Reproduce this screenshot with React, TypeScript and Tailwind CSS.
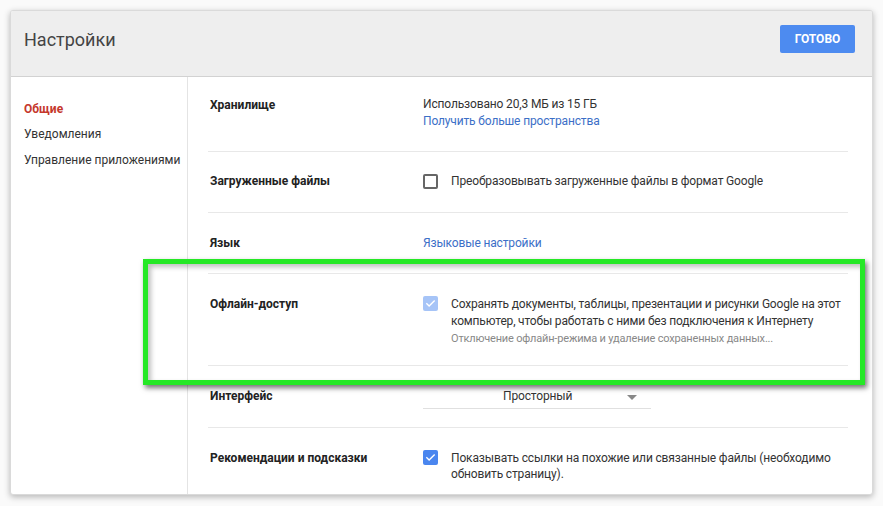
import React from "react";

const Check = ({ color }: { color: string }) => (
  <span className={`flex h-[15px] w-[15px] shrink-0 items-center justify-center rounded-[2px] ${color}`}>
    <svg width="11" height="11" viewBox="0 0 24 24" fill="none">
      <path d="M4 12.5l5 5L20 6.5" stroke="white" strokeWidth="3" strokeLinecap="square" />
    </svg>
  </span>
);

export default function App() {
  return (
    <div
      className="relative h-[506px] w-[883px] overflow-hidden bg-[#fafafa] pl-[10px] pt-[10px]"
      style={{ fontFamily: "Roboto, 'Noto Sans', sans-serif" }}
    >
      <div className="flex h-[485px] w-[863px] flex-col overflow-hidden rounded-[3px] border border-[#dadada] bg-white shadow-[0_2px_6px_rgba(0,0,0,0.28)]">
        <div className="flex h-[66px] shrink-0 items-center justify-between border-b border-[#d2d2d2] bg-[#eeeeee] pb-[9px] pl-[13px] pr-[17px]">
          <div className="text-[18px] text-[#444]">Настройки</div>
          <div className="flex h-[28px] w-[75px] items-center justify-center rounded-[2px] bg-[#4d8bf0] text-[12px] font-bold text-white">
            ГОТОВО
          </div>
        </div>
        <div className="flex flex-1">
          <div className="w-[177px] shrink-0 whitespace-nowrap border-r border-[#e4e4e4] pl-[13px] pt-[24px] text-[12px] leading-[16px] text-[#333]">
            <div className="h-[25px] font-bold text-[#c5372c]">Общие</div>
            <div className="h-[26px]">Уведомления</div>
            <div className="h-[26px]">Управление приложениями</div>
          </div>
          <div className="min-w-0 flex-1 pl-[20px] pr-[24px] text-[12px] text-[#333]">
            <div className="flex h-[75px] border-b border-[#e8e8e8] pl-[2px] pt-[19px]">
              <div className="w-[213px] shrink-0 text-[12px] font-bold text-[#222]">Хранилище</div>
              <div className="leading-[17px] tracking-[-0.15px]">
                <div>Использовано 20,3 МБ из 15 ГБ</div>
                <div className="text-[#3c6fc7]">Получить больше пространства</div>
              </div>
            </div>
            <div className="flex h-[61px] items-start border-b border-[#e8e8e8] pl-[2px] pt-[21px] leading-[17px]">
              <div className="w-[213px] shrink-0 font-bold text-[#222]">Загруженные файлы</div>
              <div className="flex items-center gap-[13px] whitespace-nowrap tracking-[-0.15px]">
                <span className="h-[15px] w-[15px] shrink-0 rounded-[2px] border-2 border-[#666]" />
                <span>Преобразовывать загруженные файлы в формат Google</span>
              </div>
            </div>
            <div className="flex h-[61px] border-b border-[#e8e8e8] pl-[2px] pt-[22px] leading-[17px]">
              <div className="w-[213px] shrink-0 font-bold text-[#222]">Язык</div>
              <div className="tracking-[-0.15px] text-[#3c6fc7]">Языковые настройки</div>
            </div>
            <div className="flex h-[92px] border-b border-[#e8e8e8] pl-[2px] pt-[22px] leading-[17px]">
              <div className="w-[213px] shrink-0 font-bold text-[#222]">Офлайн-доступ</div>
              <div className="flex items-start gap-[13px] whitespace-nowrap tracking-[-0.18px]">
                <Check color="bg-[#a6c4f7]" />
                <div>
                  <div>Сохранять документы, таблицы, презентации и рисунки Google на этот</div>
                  <div>компьютер, чтобы работать с ними без подключения к Интернету</div>
                  <div className="text-[11px] text-[#888]">
                    Отключение офлайн-режима и удаление сохраненных данных...
                  </div>
                </div>
              </div>
            </div>
            <div className="flex h-[62px] border-b border-[#e8e8e8] pl-[2px] pt-[22px] leading-[17px]">
              <div className="w-[213px] shrink-0 font-bold text-[#222]">Интерфейс</div>
              <div className="flex h-[21px] w-[228px] shrink-0 items-start border-b border-[#e0e0e0]">
                <span className="w-[204px] pl-[80px] tracking-[-0.15px]">Просторный</span>
                <svg width="10" height="17" viewBox="0 0 10 17">
                  <path d="M0 7h10L5 12z" fill="#888" />
                </svg>
              </div>
            </div>
            <div className="flex pl-[2px] pt-[22px] leading-[16px]">
              <div className="w-[213px] shrink-0 font-bold text-[#222]">Рекомендации и подсказки</div>
              <div className="flex items-start gap-[13px] whitespace-nowrap tracking-[-0.15px]">
                <Check color="bg-[#4a86ef]" />
                <div>
                  <div>Показывать ссылки на похожие или связанные файлы (необходимо</div>
                  <div>обновить страницу).</div>
                </div>
              </div>
            </div>
          </div>
        </div>
      </div>
      <div className="absolute left-[143px] top-[259px] h-[126px] w-[722px] border-[5px] border-[#25e826] shadow-[2px_3px_5px_rgba(0,0,0,0.55),inset_3px_3px_5px_rgba(0,0,0,0.25)]" />
    </div>
  );
}
